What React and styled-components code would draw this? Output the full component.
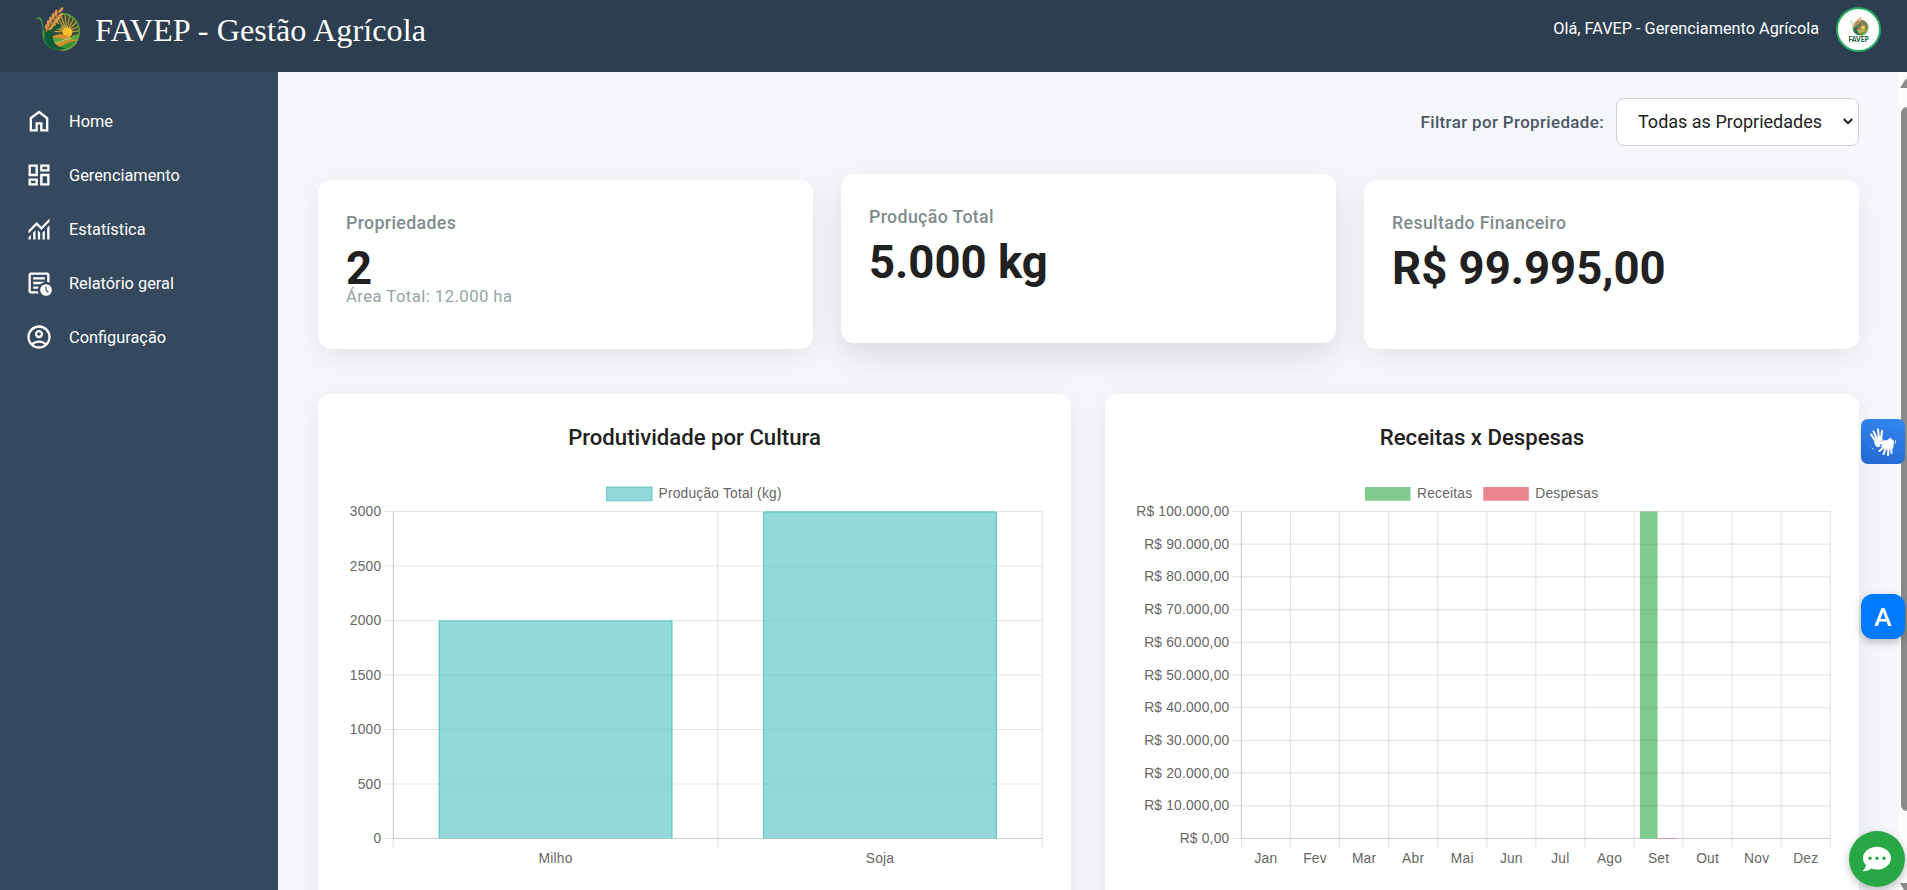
import React from "react";
import styled, { createGlobalStyle, css } from "styled-components";
import { FaCommentDots } from "react-icons/fa";

const GlobalStyle = createGlobalStyle`
  * { box-sizing: border-box; }
  html, body { margin: 0; padding: 0; overflow: hidden; }
  body { font-family: Roboto, "Liberation Sans", sans-serif; color: #212121; background: #f5f7fb; }
`;

const Page = styled.div`
  display: flex;
  flex-direction: column;
  height: 100vh;
  overflow: hidden;
`;

const Header = styled.header`
  flex: none;
  display: flex;
  justify-content: space-between;
  align-items: flex-start;
  height: 72px;
  padding: 7px 26px 0 34px;
  background: #2c3e50;
  color: #fff;
`;

const Brand = styled.div`
  display: flex;
  gap: 14px;
`;

const BrandName = styled.h1`
  margin: 0;
  font: 400 32.2px/46px "Liberation Serif", serif;
  letter-spacing: 0.08px;
  white-space: nowrap;
`;

const User = styled.div`
  display: flex;
  gap: 17px;
`;

const Greeting = styled.span`
  font-size: 16.3px;
  line-height: 43px;
  white-space: nowrap;
`;

const Avatar = styled.div`
  width: 45px;
  height: 45px;
  border: 2px solid #27a862;
  border-radius: 50%;
  background: #fff;
  display: flex;
  flex-direction: column;
  align-items: center;
  padding-top: 8px;
  svg { opacity: 0.85; }
`;

const AvatarName = styled.span`
  font: 900 6.6px/7px Lato, sans-serif;
  color: #17603c;
`;

const Body = styled.div`
  flex: 1;
  min-height: 0;
  display: flex;
`;

const Sidebar = styled.nav`
  flex: none;
  display: flex;
  flex-direction: column;
  width: 278px;
  padding-top: 22px;
  background: #34495e;
`;

const NavItem = styled.a`
  display: flex;
  align-items: center;
  gap: 16px;
  height: 54px;
  padding-left: 25px;
  color: #fff;
  font-size: 16.35px;
  svg { fill: #fff; }
`;

const Main = styled.main`
  flex: 1;
  min-width: 0;
  overflow: hidden;
  padding: 26px 40px 0;
  background: #f5f7fb;
`;

const FilterRow = styled.div`
  display: flex;
  justify-content: flex-end;
  align-items: center;
  gap: 12px;
  height: 48px;
`;

const FilterLabel = styled.label`
  font-size: 16.9px;
  font-weight: 500;
  letter-spacing: 0.38px;
  color: #4a5666;
`;

const SelectBox = styled.div`
  display: flex;
  align-items: center;
  justify-content: space-between;
  width: 243px;
  height: 48px;
  padding: 0 5px 2px 21px;
  border: 1px solid #ced2d8;
  border-radius: 8px;
  background: #fff;
  font-size: 18px;
`;

const Stats = styled.section`
  display: grid;
  grid-template-columns: repeat(3, 1fr);
  gap: 28px;
  margin-top: 34px;
`;

const StatCard = styled.article`
  height: 169px;
  padding: 28px;
  border-radius: 13px;
  background: #fff;
  box-shadow: 0 7px 28px rgba(0, 0, 0, 0.08);
  ${(p) => p.$raised && css`
    transform: translateY(-6px);
    box-shadow: 0 12px 34px rgba(0, 0, 0, 0.12);
  `}
`;

const StatTitle = styled.h3`
  margin: 0;
  font-size: 17.8px;
  font-weight: 500;
  line-height: 30px;
  letter-spacing: 0.34px;
  color: #7f8c8d;
`;

const StatValue = styled.div`
  margin-top: 11px;
  font-size: 45.5px;
  font-weight: 700;
  line-height: 40px;
`;

const StatNote = styled.div`
  font-size: 16.7px;
  line-height: 16px;
  letter-spacing: 0.44px;
  color: #95a5a6;
`;

const Charts = styled.section`
  display: grid;
  grid-template-columns: 753px 1fr;
  gap: 34px;
  margin-top: 45px;
`;

const ChartCard = styled.article`
  height: 540px;
  padding: 28px;
  border-radius: 13px;
  background: #fff;
  box-shadow: 0 7px 28px rgba(0, 0, 0, 0.08);
`;

const ChartTitle = styled.h2`
  margin: 0 0 28px;
  font-size: 22.15px;
  font-weight: 500;
  line-height: 30px;
  text-align: center;
`;

const ChartSvg = styled.svg`
  display: block;
  font: 13.8px "Liberation Sans", Arial, sans-serif;
  letter-spacing: 0.2px;
  text { fill: #666; }
`;

const Scrollbar = styled.div`
  flex: none;
  width: 8px;
  overflow: hidden;
  display: flex;
  flex-direction: column;
  align-items: flex-start;
  justify-content: space-between;
  padding: 7px 0 0 1px;
  background: #fcfcfc;
`;

const ScrollThumb = styled.div`
  width: 12px;
  height: 704px;
  margin: 0 0 53px 1px;
  border-radius: 6px;
  background: #8b8b8b;
`;

const Floating = styled.button`
  position: fixed;
  z-index: 2;
  right: 2px;
  top: ${(p) => p.$top}px;
  width: ${(p) => p.$size || 44}px;
  height: ${(p) => (p.$size ? p.$size : 45)}px;
  display: flex;
  align-items: center;
  justify-content: center;
  padding: 0;
  border: 0;
  border-radius: ${(p) => p.$radius};
  background: ${(p) => p.$bg};
  color: #fff;
  font: 500 26.5px Roboto, sans-serif;
  box-shadow: ${(p) => (p.$flat ? "none" : "0 3px 8px rgba(0,0,0,.25)")};
`;

const Logo = ({ width, height }) => (
  <svg width={width} height={height} viewBox="0 0 47 45">
    <circle cx="27.500" cy="24.500" r="17.500" fill="#3d4f3a" />
    <g stroke="#c9a23f" strokeWidth="1.100">
      <path d="M33 25 14 14M33 25 18 10M33 25 22 8M33 25 26.500 7.500M33 25 31 8M33 25 35.500 9M33 25 39.500 11.500M33 25 42.500 15M33 25 44.500 19.500M33 25 45 24M33 25 13 19M33 25 13 24" />
    </g>
    <circle cx="33.500" cy="25.500" r="4.800" fill="#fdbf2d" />
    <path d="M17 30c6-3 11-4 16-1s9 0 12-2c0 8-6 16-16 17-6-1-11-6-12-14z" fill="#e08a2c" />
    <path d="M18 31.500c8-3 10 2 15 0s8-4.500 12-4c-1 3-2 4.500-4 5.500-7-2-12 4-21 3z" fill="#5fa63c" />
    <path d="M22 40c6 1 10-6 20-6-2 5-7 8-14 8z" fill="#3f9238" />
    <path d="M18 36.500c8 0 11-4.500 19-5" fill="none" stroke="#f4dc8a" strokeWidth=".8" />
    <path d="M28 6.500a17.800 17.800 0 0 1 17.300 19c-.5 9-6 16.500-17 17.500" fill="none" stroke="#57a83a" strokeWidth="1.400" />
    <path d="M1 12C5 8 8.500 11 9 17c0 8 3 15 9 20 6 5 13 5 19 2.500-9 6.500-21 4.500-26.500-4.500C7 28 9.500 23 7.800 16.500 6.500 12 4 10.500 1 12z" fill="#3d9b3a" />
    <path d="M11 34C9 25 14 18 24 17c5 0 4 3 0 4.500-6 2.500-6.500 8-4 13 2 4.500 7 6.500 12 6.500-8 4-17 1-21-7z" fill="#0f5a35" />
    <path d="M12 25C15 17 20 9 28 1" stroke="#c8752e" strokeWidth="1.200" fill="none" />
    <g fill="#e0944d">
      <ellipse cx="27" cy="3" rx="1.400" ry="3.300" transform="rotate(38 27 3)" />
      <ellipse cx="22" cy="5.500" rx="1.400" ry="3" transform="rotate(12 22 5.500)" />
      <ellipse cx="19.200" cy="8.800" rx="1.400" ry="3" transform="rotate(8 19.200 8.800)" />
      <ellipse cx="16.500" cy="12.200" rx="1.400" ry="3" transform="rotate(4 16.500 12.200)" />
      <ellipse cx="14.200" cy="16" rx="1.400" ry="3" />
      <ellipse cx="12.300" cy="20" rx="1.300" ry="3" transform="rotate(-4 12.300 20)" />
      <ellipse cx="26.500" cy="8" rx="1.400" ry="3" transform="rotate(62 26.500 8)" />
      <ellipse cx="24" cy="11.300" rx="1.400" ry="3" transform="rotate(62 24 11.300)" />
      <ellipse cx="21.700" cy="14.800" rx="1.400" ry="3" transform="rotate(62 21.700 14.800)" />
      <ellipse cx="19.300" cy="18.300" rx="1.400" ry="3" transform="rotate(62 19.300 18.300)" />
      <ellipse cx="16.500" cy="21.500" rx="1.300" ry="2.700" transform="rotate(58 16.500 21.500)" />
    </g>
  </svg>
);

const Symbol = ({ d }) => (
  <svg width="28" height="28" viewBox="0 -960 960 960">
    <path d={d} />
  </svg>
);

const NAV = [
  {
    label: "Home",
    d: "M240-200h120v-240h240v240h120v-360L480-740 240-560v360Zm-80 80v-480l320-240 320 240v480H520v-240h-80v240H160Z",
  },
  {
    label: "Gerenciamento",
    d: "M520-600v-240h320v240H520ZM120-440v-400h320v400H120Zm400 320v-400h320v400H520Zm-400 0v-240h320v240H120Zm80-400h160v-240H200v240Zm400 320h160v-240H600v240Zm0-480h160v-80H600v80ZM200-200h160v-80H200v80Z",
  },
  {
    label: "Estatística",
    d: "M120-120v-80l80-80v160h-80Zm160 0v-240l80-80v320h-80Zm160 0v-320l80 81v239h-80Zm160 0v-239l80-80v319h-80Zm160 0v-400l80-80v480h-80ZM120-327v-113l280-280 160 160 280-280v113L560-447 400-607 120-327Z",
  },
  {
    label: "Relatório geral",
    d: "M200-120q-33 0-56.500-23.500T120-200v-560q0-33 23.500-56.500T200-840h560q33 0 56.500 23.500T840-760v268q-19-9-39-15.500t-41-9.500v-243H200v560h242q3 22 9.500 42t15.500 38H200Zm80-560v80h400v-80H280Zm0 160v80h250q40-40 90-60l60-17v-3H280Zm0 160v80h163q3-21 9-41t15-39H280ZM720-40q-83 0-141.500-58.500T520-240q0-83 58.500-141.500T720-440q83 0 141.500 58.500T920-240q0 83-58.500 141.500T720-40Zm67-105 28-28-75-75v-112h-40v128l87 87Z",
  },
  {
    label: "Configuração",
    d: "M234-276q51-39 114-61.500T480-360q69 0 132 22.500T726-276q35-41 54.500-93T800-480q0-133-93.500-226.500T480-800q-133 0-226.500 93.500T160-480q0 59 19.500 111t54.500 93Zm246-164q-59 0-99.500-40.500T340-580q0-59 40.500-99.500T480-720q59 0 99.500 40.500T620-580q0 59-40.500 99.500T480-440Zm0 360q-83 0-156-31.500T197-197q-54-54-85.500-127T80-480q0-83 31.500-156T197-763q54-54 127-85.500T480-880q83 0 156 31.500T763-763q54 54 85.500 127T880-480q0 83-31.500 156T763-197q-54 54-127 85.500T480-80Zm0-80q53 0 100-15.500t86-44.500q-39-29-86-44.500T480-280q-53 0-100 15.500T294-220q39 29 86 44.500T480-160Zm0-360q26 0 43-17t17-43q0-26-17-43t-43-17q-26 0-43 17t-17 43q0 26 17 43t43 17Z",
  },
];

const STATS = [
  { title: "Propriedades", value: "2", note: "Área Total: 12.000 ha" },
  { title: "Produção Total", value: "5.000 kg", raised: true },
  { title: "Resultado Financeiro", value: "R$ 99.995,00" },
];

const PLOT_TOP = 31.5;
const PLOT_BOTTOM = 358.5;

function BarChart({ left, right, yLabels, xLabels, max, series, legend, outlined }) {
  const step = (right - left) / xLabels.length;
  const rowStep = (PLOT_BOTTOM - PLOT_TOP) / (yLabels.length - 1);
  const slot = (step * 0.8) / series.length;
  const bar = slot * 0.9;
  return (
    <ChartSvg width="698" height="410" viewBox="0 0 698 410">
      {legend.map((l) => (
        <g key={l.label}>
          <rect x={l.x} y="7" width="45.500" height="13.700" fill={l.fill} stroke={l.stroke} strokeWidth="1.150" />
          <text x={l.x + 52} y="18.300">{l.label}</text>
        </g>
      ))}
      <g stroke="rgba(0,0,0,.1)" strokeWidth="1.150">
        {yLabels.map((label, i) => (
          <line key={label} x1={left - 9} x2={right} y1={PLOT_TOP + i * rowStep} y2={PLOT_TOP + i * rowStep} />
        ))}
        {[...xLabels, ""].map((label, i) => (
          <line key={label} x1={left + i * step} x2={left + i * step} y1={PLOT_TOP} y2={PLOT_BOTTOM + 9} />
        ))}
        <path d={`M${left} ${PLOT_TOP}V${PLOT_BOTTOM}H${right}`} fill="none" />
      </g>
      {yLabels.map((label, i) => (
        <text key={label} x={left - 12} y={PLOT_TOP + i * rowStep + 4.5} textAnchor="end">{label}</text>
      ))}
      {xLabels.map((label, i) => (
        <text key={label} x={left + (i + 0.5) * step} y="383" textAnchor="middle">{label}</text>
      ))}
      {series.map((s, si) =>
        s.data.map((value, i) => {
          if (!value) return null;
          const x = left + i * step + step * 0.1 + slot * si + slot * 0.05;
          const h = Math.max((value / max) * (PLOT_BOTTOM - PLOT_TOP), 0.6);
          return (
            <g key={`${si}-${i}`}>
              <rect x={x} y={PLOT_BOTTOM - h} width={bar} height={h} fill={s.fill} />
              {outlined && (
                <path
                  d={`M${x + 0.5} ${PLOT_BOTTOM}V${PLOT_BOTTOM - h + 0.5}H${x + bar - 0.5}V${PLOT_BOTTOM}`}
                  fill="none"
                  stroke={s.stroke}
                />
              )}
            </g>
          );
        })
      )}
    </ChartSvg>
  );
}

const MONTHS = ["Jan", "Fev", "Mar", "Abr", "Mai", "Jun", "Jul", "Ago", "Set", "Out", "Nov", "Dez"];
const MONEY = [100, 90, 80, 70, 60, 50, 40, 30, 20, 10].map((n) => `R$ ${n}.000,00`).concat("R$ 0,00");
const TEAL = "rgba(75,192,192,.6)";
const GREEN = "rgba(40,167,69,.6)";
const RED = "rgba(220,53,69,.6)";
const onlySeptember = (value) => MONTHS.map((m) => (m === "Set" ? value : 0));

const HandsIcon = () => (
  <svg width="28" height="28" viewBox="0 0 28 28" fill="none" stroke="#fff" strokeLinecap="round" strokeLinejoin="round">
    <path d="M6.500 13 2 6.500M8 11 4.500 3.500M10 10.500 9 1.500M12 11 13 3" strokeWidth="2.100" />
    <path d="M5.500 11.500 11 9.500l2.500 2-4 3.500 1.500 3-2.500 1C5.500 17 6 14 5.500 11.500z" fill="#fff" strokeWidth="1" />
    <path d="M15 19 10.500 23M17 20 14.500 26M19.500 20 19 27M22 18.500 22.500 25" strokeWidth="2.100" />
    <path d="M10 15.500 14 13h4.500L21 10.500l3.500 3L23.500 20l-7 1-4-2.500 3-2.500z" fill="#fff" strokeWidth="1.300" />
    <path d="M26.500 12.500v3M3 20l1.500 1.500" strokeWidth="1" opacity=".7" />
  </svg>
);

export default function App() {
  return (
    <Page>
      <GlobalStyle />
      <Header>
        <Brand>
          <Logo width={47} height={45} />
          <BrandName>FAVEP - Gestão Agrícola</BrandName>
        </Brand>
        <User>
          <Greeting>Olá, FAVEP - Gerenciamento Agrícola</Greeting>
          <Avatar>
            <Logo width={20} height={19} />
            <AvatarName>FAVEP</AvatarName>
          </Avatar>
        </User>
      </Header>
      <Body>
        <Sidebar>
          {NAV.map((item) => (
            <NavItem key={item.label}>
              <Symbol d={item.d} />
              <span>{item.label}</span>
            </NavItem>
          ))}
        </Sidebar>
        <Main>
          <FilterRow>
            <FilterLabel>Filtrar por Propriedade:</FilterLabel>
            <SelectBox>
              <span>Todas as Propriedades</span>
              <svg width="10" height="7" viewBox="0 0 10 7" fill="none" stroke="#1c1c1c" strokeWidth="2">
                <path d="M.8 1 5 5.200 9.200 1" />
              </svg>
            </SelectBox>
          </FilterRow>
          <Stats>
            {STATS.map((s) => (
              <StatCard key={s.title} $raised={s.raised}>
                <StatTitle>{s.title}</StatTitle>
                <StatValue>{s.value}</StatValue>
                {s.note && <StatNote>{s.note}</StatNote>}
              </StatCard>
            ))}
          </Stats>
          <Charts>
            <ChartCard>
              <ChartTitle>Produtividade por Cultura</ChartTitle>
              <BarChart
                left={47.3}
                right={696.3}
                yLabels={["3000", "2500", "2000", "1500", "1000", "500", "0"]}
                xLabels={["Milho", "Soja"]}
                max={3000}
                outlined
                series={[{ data: [2000, 3000], fill: TEAL, stroke: "rgba(75,192,192,.8)" }]}
                legend={[{ label: "Produção Total (kg)", x: 260.5, fill: TEAL, stroke: "rgba(75,192,192,.7)" }]}
              />
            </ChartCard>
            <ChartCard>
              <ChartTitle>Receitas x Despesas</ChartTitle>
              <BarChart
                left={108.4}
                right={697.3}
                yLabels={MONEY}
                xLabels={MONTHS}
                max={100000}
                series={[
                  { data: onlySeptember(100000), fill: GREEN },
                  { data: onlySeptember(5), fill: RED },
                ]}
                legend={[
                  { label: "Receitas", x: 232, fill: GREEN, stroke: "none" },
                  { label: "Despesas", x: 350.3, fill: RED, stroke: "none" },
                ]}
              />
            </ChartCard>
          </Charts>
        </Main>
        <Scrollbar>
          <svg width="14" height="9" viewBox="0 0 14 9"><path d="M0 9 5 1q2-2 4 0l5 8z" fill="#8b8b8b" /></svg>
          <ScrollThumb />
          <svg width="14" height="7" viewBox="0 0 14 7"><path d="M0 0h14L9 7H4z" fill="#8b8b8b" /></svg>
        </Scrollbar>
      </Body>
      <Floating $top={419} $radius="7px" $bg="linear-gradient(15deg,#2568cf,#3387f2)" $flat aria-label="Libras">
        <HandsIcon />
      </Floating>
      <Floating $top={594} $radius="12px" $bg="#007bff">A</Floating>
      <Floating $top={831} $size={56} $radius="50%" $bg="#28a745" aria-label="Chat">
        <FaCommentDots size={28} />
      </Floating>
    </Page>
  );
}
